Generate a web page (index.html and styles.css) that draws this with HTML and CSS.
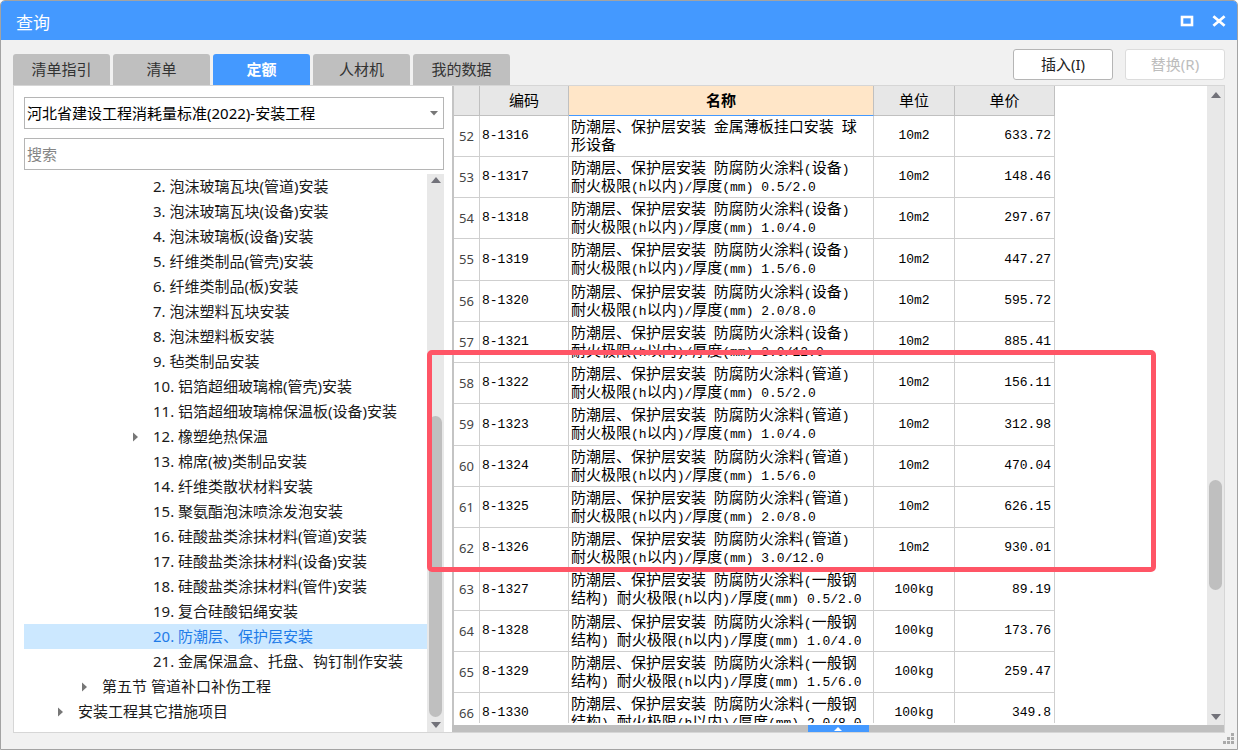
FILE: index.html
```html
<!DOCTYPE html>
<html lang="zh-CN">
<head>
<meta charset="utf-8">
<meta name="viewport" content="width=device-width, initial-scale=1">
<title>查询</title>
<link rel="stylesheet" href="styles.css">
</head>
<body>
<div class="window">
  <header class="titlebar">
    <h1 class="title">查询</h1>
    <div class="window-controls">
      <button class="window-btn" type="button" aria-label="最大化">
        <svg width="14" height="12" viewBox="0 0 14 12"><rect x="2" y="2" width="10" height="8" fill="none" stroke="#fff" stroke-width="2.6"/></svg>
      </button>
      <button class="window-btn" type="button" aria-label="关闭">
        <svg width="14" height="12" viewBox="0 0 14 12"><path d="M1.4 1.2 12.6 10.8M12.6 1.2 1.4 10.8" stroke="#fff" stroke-width="2.8"/></svg>
      </button>
    </div>
  </header>

  <div class="toolbar">
    <div class="tabs" role="tablist">
      <button class="tab" type="button" role="tab" aria-selected="false">清单指引</button>
      <button class="tab" type="button" role="tab" aria-selected="false">清单</button>
      <button class="tab tab-active" type="button" role="tab" aria-selected="true">定额</button>
      <button class="tab" type="button" role="tab" aria-selected="false">人材机</button>
      <button class="tab" type="button" role="tab" aria-selected="false">我的数据</button>
    </div>
    <div class="actions">
      <button class="action" type="button">插入(I)</button>
      <button class="action" type="button" disabled>替换(R)</button>
    </div>
  </div>

  <main class="content">
    <aside class="sidebar">
      <div class="select-wrap">
        <select class="field library" aria-label="定额库">
          <option>河北省建设工程消耗量标准(2022)-安装工程</option>
        </select>
        <svg class="caret" width="8" height="5" viewBox="0 0 8 5"><path d="M0 0h8L4 4.5z" fill="#777"/></svg>
      </div>
      <input class="field search" type="text" placeholder="搜索" aria-label="搜索">
      <div class="tree-area">
        <ul class="tree" role="tree">
          <li class="node leaf" role="treeitem">2. 泡沫玻璃瓦块(管道)安装</li>
          <li class="node leaf" role="treeitem">3. 泡沫玻璃瓦块(设备)安装</li>
          <li class="node leaf" role="treeitem">4. 泡沫玻璃板(设备)安装</li>
          <li class="node leaf" role="treeitem">5. 纤维类制品(管壳)安装</li>
          <li class="node leaf" role="treeitem">6. 纤维类制品(板)安装</li>
          <li class="node leaf" role="treeitem">7. 泡沫塑料瓦块安装</li>
          <li class="node leaf" role="treeitem">8. 泡沫塑料板安装</li>
          <li class="node leaf" role="treeitem">9. 毡类制品安装</li>
          <li class="node leaf" role="treeitem">10. 铝箔超细玻璃棉(管壳)安装</li>
          <li class="node leaf" role="treeitem">11. 铝箔超细玻璃棉保温板(设备)安装</li>
          <li class="node level-3" role="treeitem" aria-expanded="false"><svg class="twisty" viewBox="0 0 20 10"><path d="M0 0.5v9L5 5z" fill="#777"/></svg>12. 橡塑绝热保温</li>
          <li class="node leaf" role="treeitem">13. 棉席(被)类制品安装</li>
          <li class="node leaf" role="treeitem">14. 纤维类散状材料安装</li>
          <li class="node leaf" role="treeitem">15. 聚氨酯泡沫喷涂发泡安装</li>
          <li class="node leaf" role="treeitem">16. 硅酸盐类涂抹材料(管道)安装</li>
          <li class="node leaf" role="treeitem">17. 硅酸盐类涂抹材料(设备)安装</li>
          <li class="node leaf" role="treeitem">18. 硅酸盐类涂抹材料(管件)安装</li>
          <li class="node leaf" role="treeitem">19. 复合硅酸铝绳安装</li>
          <li class="node leaf selected" role="treeitem" aria-selected="true">20. 防潮层、保护层安装</li>
          <li class="node leaf" role="treeitem">21. 金属保温盒、托盘、钩钉制作安装</li>
          <li class="node level-2" role="treeitem" aria-expanded="false"><svg class="twisty" viewBox="0 0 20 10"><path d="M0 0.5v9L5 5z" fill="#777"/></svg>第五节 管道补口补伤工程</li>
          <li class="node level-1" role="treeitem" aria-expanded="false"><svg class="twisty" viewBox="0 0 20 10"><path d="M0 0.5v9L5 5z" fill="#777"/></svg>安装工程其它措施项目</li>
        </ul>
        <div class="scrollbar tree-scroll">
          <svg class="arrow" viewBox="0 0 10 6"><path d="M0 6h10L5 0z" fill="#72727a"/></svg>
          <div class="track"><div class="thumb"></div></div>
          <svg class="arrow" viewBox="0 0 10 6"><path d="M0 0h10L5 6z" fill="#72727a"/></svg>
        </div>
      </div>
    </aside>

    <section class="results">
      <div class="grid-area">
        <div class="grid-view">
          <table class="grid">
            <colgroup><col class="c-row"><col class="c-code"><col class="c-name"><col class="c-unit"><col class="c-price"></colgroup>
            <thead>
              <tr><th></th><th>编码</th><th class="sorted">名称</th><th>单位</th><th>单价</th></tr>
            </thead>
            <tbody>
              <tr><th scope="row">52</th><td>8-1316</td><td class="name">防潮层、保护层安装<i> </i>金属薄板挂口安装<i> </i>球<br>形设备</td><td>10m2</td><td>633.72</td></tr>
              <tr><th scope="row">53</th><td>8-1317</td><td class="name">防潮层、保护层安装<i> </i>防腐防火涂料<i>(</i>设备<i>)</i><br>耐火极限<i>(h</i>以内<i>)/</i>厚度<i>(mm) 0.5/2.0</i></td><td>10m2</td><td>148.46</td></tr>
              <tr><th scope="row">54</th><td>8-1318</td><td class="name">防潮层、保护层安装<i> </i>防腐防火涂料<i>(</i>设备<i>)</i><br>耐火极限<i>(h</i>以内<i>)/</i>厚度<i>(mm) 1.0/4.0</i></td><td>10m2</td><td>297.67</td></tr>
              <tr><th scope="row">55</th><td>8-1319</td><td class="name">防潮层、保护层安装<i> </i>防腐防火涂料<i>(</i>设备<i>)</i><br>耐火极限<i>(h</i>以内<i>)/</i>厚度<i>(mm) 1.5/6.0</i></td><td>10m2</td><td>447.27</td></tr>
              <tr><th scope="row">56</th><td>8-1320</td><td class="name">防潮层、保护层安装<i> </i>防腐防火涂料<i>(</i>设备<i>)</i><br>耐火极限<i>(h</i>以内<i>)/</i>厚度<i>(mm) 2.0/8.0</i></td><td>10m2</td><td>595.72</td></tr>
              <tr><th scope="row">57</th><td>8-1321</td><td class="name">防潮层、保护层安装<i> </i>防腐防火涂料<i>(</i>设备<i>)</i><br>耐火极限<i>(h</i>以内<i>)/</i>厚度<i>(mm) 3.0/12.0</i></td><td>10m2</td><td>885.41</td></tr>
              <tr><th scope="row">58</th><td>8-1322</td><td class="name">防潮层、保护层安装<i> </i>防腐防火涂料<i>(</i>管道<i>)</i><br>耐火极限<i>(h</i>以内<i>)/</i>厚度<i>(mm) 0.5/2.0</i></td><td>10m2</td><td>156.11</td></tr>
              <tr><th scope="row">59</th><td>8-1323</td><td class="name">防潮层、保护层安装<i> </i>防腐防火涂料<i>(</i>管道<i>)</i><br>耐火极限<i>(h</i>以内<i>)/</i>厚度<i>(mm) 1.0/4.0</i></td><td>10m2</td><td>312.98</td></tr>
              <tr><th scope="row">60</th><td>8-1324</td><td class="name">防潮层、保护层安装<i> </i>防腐防火涂料<i>(</i>管道<i>)</i><br>耐火极限<i>(h</i>以内<i>)/</i>厚度<i>(mm) 1.5/6.0</i></td><td>10m2</td><td>470.04</td></tr>
              <tr><th scope="row">61</th><td>8-1325</td><td class="name">防潮层、保护层安装<i> </i>防腐防火涂料<i>(</i>管道<i>)</i><br>耐火极限<i>(h</i>以内<i>)/</i>厚度<i>(mm) 2.0/8.0</i></td><td>10m2</td><td>626.15</td></tr>
              <tr><th scope="row">62</th><td>8-1326</td><td class="name">防潮层、保护层安装<i> </i>防腐防火涂料<i>(</i>管道<i>)</i><br>耐火极限<i>(h</i>以内<i>)/</i>厚度<i>(mm) 3.0/12.0</i></td><td>10m2</td><td>930.01</td></tr>
              <tr><th scope="row">63</th><td>8-1327</td><td class="name">防潮层、保护层安装<i> </i>防腐防火涂料<i>(</i>一般钢<br>结构<i>) </i>耐火极限<i>(h</i>以内<i>)/</i>厚度<i>(mm) 0.5/2.0</i></td><td>100kg</td><td>89.19</td></tr>
              <tr><th scope="row">64</th><td>8-1328</td><td class="name">防潮层、保护层安装<i> </i>防腐防火涂料<i>(</i>一般钢<br>结构<i>) </i>耐火极限<i>(h</i>以内<i>)/</i>厚度<i>(mm) 1.0/4.0</i></td><td>100kg</td><td>173.76</td></tr>
              <tr><th scope="row">65</th><td>8-1329</td><td class="name">防潮层、保护层安装<i> </i>防腐防火涂料<i>(</i>一般钢<br>结构<i>) </i>耐火极限<i>(h</i>以内<i>)/</i>厚度<i>(mm) 1.5/6.0</i></td><td>100kg</td><td>259.47</td></tr>
              <tr><th scope="row">66</th><td>8-1330</td><td class="name">防潮层、保护层安装<i> </i>防腐防火涂料<i>(</i>一般钢<br>结构<i>) </i>耐火极限<i>(h</i>以内<i>)/</i>厚度<i>(mm) 2.0/8.0</i></td><td>100kg</td><td>349.8</td></tr>
            </tbody>
          </table>
        </div>
        <div class="scrollbar grid-scroll">
          <svg class="arrow" viewBox="0 0 10 6"><path d="M0 6h10L5 0z" fill="#72727a"/></svg>
          <div class="track"><div class="thumb"></div></div>
          <svg class="arrow" viewBox="0 0 10 6"><path d="M0 0h10L5 6z" fill="#72727a"/></svg>
        </div>
      </div>
      <div class="splitter">
        <button class="splitter-handle" type="button" aria-label="展开"><svg width="8" height="4" viewBox="0 0 8 4"><path d="M0 4h8L4 0z" fill="#fff"/></svg></button>
      </div>
      <div class="highlight"></div>
    </section>
  </main>

  <footer class="statusbar">
    <svg width="11" height="11" viewBox="0 0 11 11" fill="#aaa"><path d="M8 0h3v3H8zM4 4h3v3H4zM8 4h3v3H8zM0 8h3v3H0zM4 8h3v3H4zM8 8h3v3H8z"/></svg>
  </footer>
</div>
</body>
</html>
```
FILE: styles.css
```css
* { box-sizing: border-box; }

body {
  margin: 0;
  background: #fff;
  font: 15px/25px "Noto Sans", "Noto Sans CJK SC", sans-serif;
  color: #1a1a1a;
}

button, input, select { font: inherit; margin: 0; padding: 0; }

.window {
  display: flex;
  flex-direction: column;
  height: 100vh;
  border: 1px solid #a3a3a3;
  border-radius: 5px 5px 0 0;
  background: #f1f1f1;
  overflow: hidden;
}

.titlebar {
  flex: none;
  display: flex;
  align-items: center;
  justify-content: space-between;
  height: 39px;
  padding: 0 11px 0 15px;
  background: #4499ff;
  color: #fff;
}
.title { margin: 4px 0 0; font-size: 17px; font-weight: 400; }
.window-controls { display: flex; gap: 18px; }
.window-btn {
  display: flex;
  border: 0;
  background: none;
}

.toolbar {
  flex: none;
  display: flex;
  align-items: flex-end;
  justify-content: space-between;
  height: 45px;
  padding: 0 12px;
}
.tabs { display: flex; gap: 3px; }
.tab {
  width: 97px;
  height: 31px;
  border: 0;
  border-radius: 3px 3px 0 0;
  background: #bfbfbf;
  color: #333;
}
.tab-active { background: #4499ff; color: #fff; font-weight: 700; }

.actions { display: flex; gap: 12px; padding-bottom: 5px; }
.action {
  width: 100px;
  height: 31px;
  border: 1px solid #b5b5b5;
  border-radius: 3px;
  background: #fff;
  color: #222;
}
.action:disabled { border-color: #dcdcdc; color: #bdbdbd; }

.content {
  flex: 1;
  min-height: 0;
  display: flex;
  gap: 8px;
  margin: 0 12px;
  border: 1px solid #d6d6d6;
  background: #fff;
}

.sidebar {
  flex: none;
  display: flex;
  flex-direction: column;
  width: 430px;
  padding: 11px 0 0 10px;
}
.select-wrap { position: relative; margin-bottom: 9px; }
.field {
  display: block;
  width: 100%;
  height: 32px;
  padding: 0 2px;
  border: 1px solid #b5b5b5;
  border-radius: 0;
  background: #fff;
  color: #000;
}
.library { appearance: none; }
.search { flex: none; }
.search::placeholder { color: #858585; }
.caret { position: absolute; right: 6px; top: 14px; }

.tree-area {
  flex: 1;
  min-height: 0;
  display: flex;
  margin-top: 4px;
}
.tree {
  flex: 1;
  margin: 0;
  padding: 0;
  list-style: none;
  overflow: hidden;
  white-space: nowrap;
}
.node { display: flex; align-items: center; height: 25px; }
.leaf { padding-left: 129px; }
.level-3 { padding-left: 109px; }
.level-2 { padding-left: 58px; }
.level-1 { padding-left: 34px; }
.twisty { flex: none; width: 20px; height: 10px; }
.selected { background: #cce8ff; color: #1e7be8; }

.scrollbar {
  flex: none;
  display: flex;
  flex-direction: column;
  align-items: center;
  width: 17px;
  background: #e8e8e8;
}
.arrow { flex: none; width: 10px; height: 6px; }
.track { flex: 1; display: flex; flex-direction: column; width: 13px; }
.track::before, .track::after { content: ""; }
.thumb { border-radius: 7px; background: #bfbfbf; }
.tree-scroll { padding: 3px 0 4px; }
.tree-scroll .track { padding: 4px 0; }
.tree-scroll .track::before { flex: 229; }
.tree-scroll .thumb { flex: 301; }
.tree-scroll .track::after { flex: 1; }
.grid-scroll { padding: 6px 0 5px; }
.grid-scroll .track { padding: 4px 0; }
.grid-scroll .track::before { flex: 377; }
.grid-scroll .thumb { flex: 110; }
.grid-scroll .track::after { flex: 120; }

.results {
  position: relative;
  flex: 1;
  min-width: 0;
  display: flex;
  flex-direction: column;
  border-left: 2px solid #c4c4c4;
}
.grid-area { flex: 1; min-height: 0; display: flex; }
.grid-view { flex: 1; min-width: 0; margin-bottom: 2px; overflow: hidden; }
.grid {
  width: 601px;
  table-layout: fixed;
  border-collapse: separate;
  border-spacing: 0;
  line-height: 17px;
  color: #000;
}
.c-row { width: 26px; }
.c-code { width: 89px; }
.c-name { width: 305px; }
.c-unit { width: 81px; }
.c-price { width: 100px; }

.grid th, .grid td {
  padding: 0 2px;
  border: 0 solid #cfcfcf;
  border-width: 0 1px 1px 0;
}
.grid thead th {
  height: 30px;
  border-color: #c0c0c0;
  background: #e7e7e7;
  font-weight: 400;
}
.grid thead .sorted { border-bottom-color: #4499ff; background: #ffe6c8; font-weight: 700; }
.grid tbody tr { height: 41px; }
.grid tbody tr:nth-child(4n) { height: 42px; }
.grid tbody th { padding: 0; font-size: 13px; font-weight: 400; color: #444; }
.grid td { padding-bottom: 1px; font: 13px/17px "Liberation Mono", monospace; }
.grid td:nth-child(4) { text-align: center; }
.grid td:nth-child(5) { padding-right: 3px; text-align: right; }
.grid .name { padding-bottom: 3px; font: 15px/17px "Noto Sans CJK SC", sans-serif; white-space: nowrap; }
.name i { font: 13px/1 "Liberation Mono", monospace; white-space: pre; }

.splitter {
  flex: none;
  display: flex;
  justify-content: center;
  height: 7px;
  margin-left: -2px;
  background: #bfbfbf;
}
.splitter-handle {
  display: flex;
  align-items: center;
  justify-content: center;
  width: 61px;
  height: 7px;
  border: 0;
  background: #4499ff;
}

.highlight {
  position: absolute;
  left: -27px;
  top: 264px;
  width: 729px;
  height: 222px;
  border: 5px solid #ff5566;
  border-radius: 5px;
  pointer-events: none;
}

.statusbar {
  flex: none;
  display: flex;
  justify-content: flex-end;
  height: 16px;
  padding-right: 3px;
}
```
